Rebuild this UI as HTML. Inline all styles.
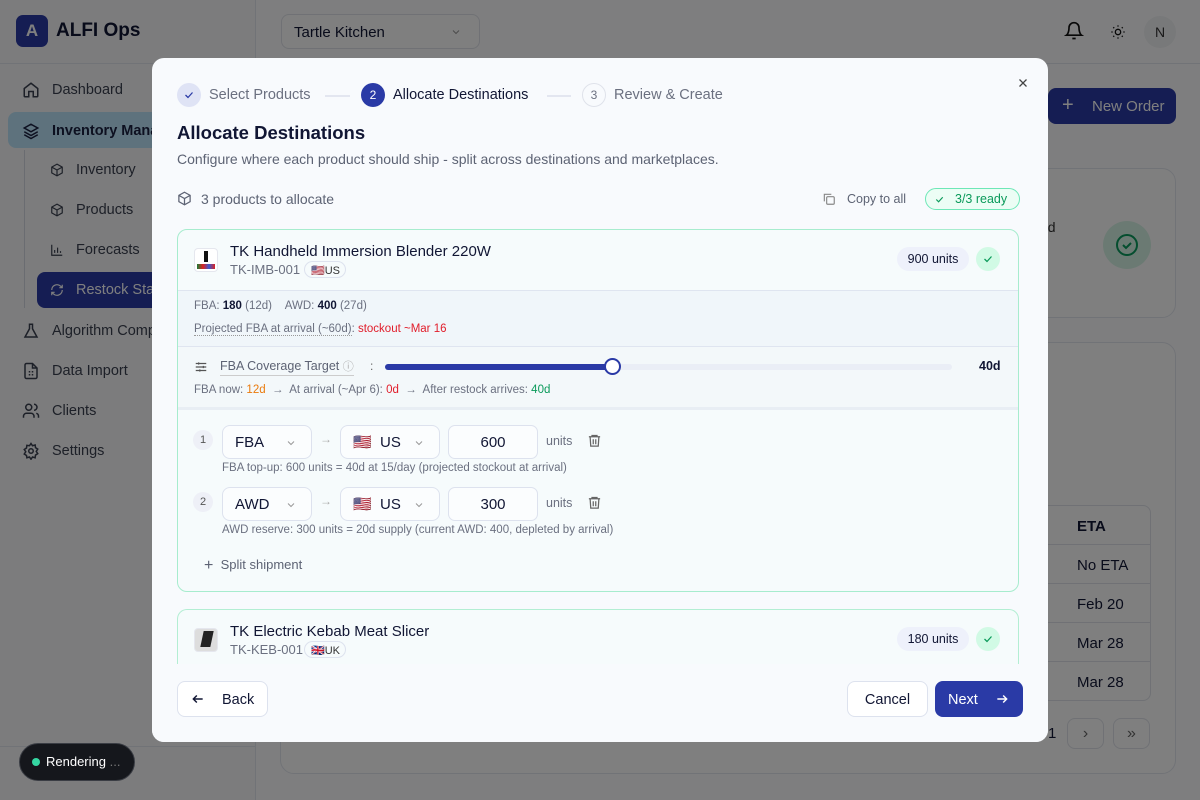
<!DOCTYPE html>
<html><head><meta charset="utf-8">
<style>
*{box-sizing:border-box;margin:0;padding:0}
body{width:1200px;height:800px;overflow:hidden;position:relative;font-family:"Liberation Sans",sans-serif;background:#fdfdfe;color:#111634}
.a{position:absolute}
.side{left:0;top:0;width:256px;height:800px;background:#f8f9fb;border-right:1px solid #e3e6ee}
.nav{font-size:14.5px;color:#3b4150;display:flex;align-items:center}
.nav svg{margin-right:12px}
.ov{left:0;top:0;width:1200px;height:800px;background:rgba(0,0,0,.5)}
.modal{left:152px;top:58px;width:896px;height:684px;background:#f8fafd;border-radius:12px;overflow:hidden}
.t{position:absolute;white-space:nowrap}
.sel{position:absolute;height:34px;border:1px solid #dde2ee;border-radius:8px;background:#fbfdfe;font-size:15px;display:flex;align-items:center;padding-left:12px}
.chev{position:absolute;right:14px;top:11px}
</style></head><body>
<div class="a side">
  <div class="a" style="left:16px;top:15px;width:32px;height:32px;border-radius:7px;background:#2a3aa6;color:#fff;font-weight:bold;font-size:17px;text-align:center;line-height:32px">A</div>
  <div class="t" style="left:56px;top:20px;font-size:19px;font-weight:bold">ALFI Ops</div>
  <div class="a" style="left:0;top:63px;width:256px;border-top:1px solid #e3e6ee"></div>
  <div class="a nav" style="left:22px;top:81px"><svg width="18" height="18" viewBox="0 0 24 24" fill="none" stroke="#3b4150" stroke-width="2"><path d="M3 10l9-7 9 7v10a1 1 0 0 1-1 1h-5v-7h-6v7H4a1 1 0 0 1-1-1z"/></svg>Dashboard</div>
  <div class="a" style="left:8px;top:112px;width:260px;height:36px;border-radius:8px;background:#bde5fb"></div>
  <div class="a nav" style="left:22px;top:122px;font-weight:bold;color:#1a2040"><svg width="18" height="18" viewBox="0 0 24 24" fill="none" stroke="#1a2040" stroke-width="2"><path d="M12 3l9 5-9 5-9-5z M3 13l9 5 9-5 M3 17l9 5 9-5"/></svg>Inventory Management</div>
  <div class="a" style="left:24px;top:150px;height:158px;border-left:1px solid #d5d9e2"></div>
  <div class="a nav" style="left:50px;top:162px"><svg width="14" height="14" viewBox="0 0 24 24" fill="none" stroke="#3b4150" stroke-width="2"><path d="M12 2l9 5v10l-9 5-9-5V7z M3 7l9 5 9-5 M12 12v10"/></svg>Inventory</div>
  <div class="a nav" style="left:50px;top:202px"><svg width="14" height="14" viewBox="0 0 24 24" fill="none" stroke="#3b4150" stroke-width="2"><path d="M12 2l9 5v10l-9 5-9-5V7z M3 7l9 5 9-5 M12 12v10"/></svg>Products</div>
  <div class="a nav" style="left:50px;top:242px"><svg width="14" height="14" viewBox="0 0 24 24" fill="none" stroke="#3b4150" stroke-width="2"><path d="M3 3v18h18 M8 17v-5 M13 17V8 M18 17v-3"/></svg>Forecasts</div>
  <div class="a" style="left:37px;top:272px;width:230px;height:36px;border-radius:8px;background:#2a3aa6"></div>
  <div class="a nav" style="left:50px;top:282px;color:#fff"><svg width="14" height="14" viewBox="0 0 24 24" fill="none" stroke="#fff" stroke-width="2"><path d="M21 12a9 9 0 0 1-15 6.7L3 16 M3 12a9 9 0 0 1 15-6.7L21 8 M21 3v5h-5 M3 21v-5h5"/></svg>Restock Starter</div>
  <div class="a nav" style="left:22px;top:322px"><svg width="18" height="18" viewBox="0 0 24 24" fill="none" stroke="#3b4150" stroke-width="2"><path d="M9 3h6 M10 3v6L4 20h16l-6-11V3"/></svg>Algorithm Comparison</div>
  <div class="a nav" style="left:22px;top:362px"><svg width="18" height="18" viewBox="0 0 24 24" fill="none" stroke="#3b4150" stroke-width="2"><path d="M14 2H6a2 2 0 0 0-2 2v16a2 2 0 0 0 2 2h12a2 2 0 0 0 2-2V8z M14 2v6h6 M9 13h2 M13 13h2 M9 17h2 M13 17h2"/></svg>Data Import</div>
  <div class="a nav" style="left:22px;top:402px"><svg width="18" height="18" viewBox="0 0 24 24" fill="none" stroke="#3b4150" stroke-width="2"><circle cx="9" cy="7" r="4"/><path d="M2 21v-2a4 4 0 0 1 4-4h6a4 4 0 0 1 4 4v2 M16 3a4 4 0 0 1 0 8 M22 21v-2a4 4 0 0 0-3-3.9"/></svg>Clients</div>
  <div class="a nav" style="left:22px;top:442px"><svg width="18" height="18" viewBox="0 0 24 24" fill="none" stroke="#3b4150" stroke-width="2"><circle cx="12" cy="12" r="3"/><path d="M12 2l2 3 3.5-1 .5 3.5 3 2-2 3 2 3-3 2-.5 3.5-3.5-1-2 3-2-3-3.5 1L6 18l-3-2 2-3-2-3 3-2 .5-3.5L10 5z"/></svg>Settings</div>
  <div class="a" style="left:0;top:746px;width:256px;border-top:1px solid #e3e6ee"></div>
</div>
<div class="a" style="left:256px;top:63px;width:944px;border-top:1px solid #e3e6ee"></div>
<div class="a" style="left:281px;top:14px;width:199px;height:35px;border:1px solid #e0e3ea;border-radius:8px;background:#fff;font-size:15px;padding:9px 12px">Tartle Kitchen</div>
<svg class="a" style="left:450px;top:26px" width="12" height="12" viewBox="0 0 24 24" fill="none" stroke="#999" stroke-width="2"><path d="M6 9l6 6 6-6"/></svg>
<svg class="a" style="left:1064px;top:21px" width="20" height="20" viewBox="0 0 24 24" fill="none" stroke="#111" stroke-width="2"><path d="M6 8a6 6 0 0 1 12 0c0 7 3 9 3 9H3s3-2 3-9 M10 21h4"/></svg>
<svg class="a" style="left:1110px;top:24px" width="16" height="16" viewBox="0 0 24 24" fill="none" stroke="#111" stroke-width="2"><circle cx="12" cy="12" r="4"/><path d="M12 2v2M12 20v2M4.9 4.9l1.4 1.4M17.7 17.7l1.4 1.4M2 12h2M20 12h2M4.9 19.1l1.4-1.4M17.7 6.3l1.4-1.4"/></svg>
<div class="a" style="left:1144px;top:16px;width:32px;height:32px;border-radius:50%;background:#f1f2f5;font-size:14px;text-align:center;line-height:32px;color:#333">N</div>
<div class="a" style="left:1048px;top:88px;width:128px;height:36px;border-radius:8px;background:#2a3aa6;color:#fff;font-size:15px;padding:10px 0 0 44px">New Order</div>
<div class="t" style="left:1062px;top:94px;color:#fff;font-size:20px">+</div>
<div class="a" style="left:280px;top:168px;width:896px;height:150px;border:1px solid #e3e6ee;border-radius:14px;background:#fff"></div>
<div class="t" style="left:1040px;top:219px;font-size:14px;color:#333">ed</div>
<div class="a" style="left:1103px;top:221px;width:48px;height:48px;border-radius:50%;background:#d7f5e6"></div>
<svg class="a" style="left:1115px;top:233px" width="24" height="24" viewBox="0 0 24 24" fill="none" stroke="#0b9c5e" stroke-width="2"><circle cx="12" cy="12" r="10"/><path d="M8 12l3 3 5-5"/></svg>
<div class="a" style="left:280px;top:342px;width:896px;height:432px;border:1px solid #e3e6ee;border-radius:14px;background:#fff"></div>
<div class="a" style="left:960px;top:505px;width:191px;height:196px;border:1px solid #e0e3ea;border-radius:8px;overflow:hidden;font-size:15px">
  <div style="height:39px;border-bottom:1px solid #e0e3ea;padding:12px 0 0 116px;font-weight:bold">ETA</div>
  <div style="height:39px;border-bottom:1px solid #e0e3ea;padding:12px 0 0 116px">No ETA</div>
  <div style="height:39px;border-bottom:1px solid #e0e3ea;padding:12px 0 0 116px">Feb 20</div>
  <div style="height:39px;border-bottom:1px solid #e0e3ea;padding:12px 0 0 116px">Mar 28</div>
  <div style="height:39px;padding:12px 0 0 116px">Mar 28</div>
</div>
<div class="t" style="left:1048px;top:725px;font-size:15px">1</div>
<div class="a" style="left:1067px;top:718px;width:37px;height:31px;border:1px solid #e0e3ea;border-radius:8px;text-align:center;line-height:29px;color:#666">›</div>
<div class="a" style="left:1113px;top:718px;width:37px;height:31px;border:1px solid #e0e3ea;border-radius:8px;text-align:center;line-height:29px;color:#666">»</div>
<div class="a ov"></div>

<div class="a" style="left:19px;top:743px;width:116px;height:38px;border-radius:19px;background:#15171c;border:1px solid #3a3d44"></div>
<div class="a" style="left:32px;top:758px;width:8px;height:8px;border-radius:50%;background:#35d6a2"></div>
<div class="t" style="left:46px;top:754px;color:#fff;font-size:13px">Rendering <span style="color:#777">...</span></div>

<div class="a modal">
  <div class="a" style="left:25px;top:25px;width:24px;height:24px;border-radius:50%;background:#dfe3f5"></div>
  <svg class="a" style="left:31px;top:31px" width="12" height="12" viewBox="0 0 24 24" fill="none" stroke="#2a3aa6" stroke-width="2.5"><path d="M5 12l5 5 9-10"/></svg>
  <div class="t" style="left:57px;top:29px;font-size:14.5px;color:#6b7080">Select Products</div>
  <div class="a" style="left:173px;top:37px;width:25px;border-top:2px solid #e3e6f0"></div>
  <div class="a" style="left:209px;top:25px;width:24px;height:24px;border-radius:50%;background:#2a3aa6;color:#fff;font-size:12px;text-align:center;line-height:24px">2</div>
  <div class="t" style="left:241px;top:29px;font-size:14.5px;color:#111634">Allocate Destinations</div>
  <div class="a" style="left:395px;top:37px;width:24px;border-top:2px solid #e3e6f0"></div>
  <div class="a" style="left:430px;top:25px;width:24px;height:24px;border-radius:50%;border:1px solid #dfe2ea;color:#6b7080;font-size:12px;text-align:center;line-height:22px">3</div>
  <div class="t" style="left:462px;top:29px;font-size:14.5px;color:#6b7080">Review &amp; Create</div>
  <svg class="a" style="left:865px;top:19px" width="12" height="12" viewBox="0 0 24 24" fill="none" stroke="#444" stroke-width="2.5"><path d="M5 5l14 14M19 5L5 19"/></svg>

  <div class="t" style="left:25px;top:64px;font-size:18.5px;font-weight:bold;color:#111634">Allocate Destinations</div>
  <div class="t" style="left:25px;top:93px;font-size:14px;color:#5d6374">Configure where each product should ship - split across destinations and marketplaces.</div>

  <svg class="a" style="left:25px;top:133px" width="15" height="15" viewBox="0 0 24 24" fill="none" stroke="#5d6374" stroke-width="2"><path d="M12 2l9 5v10l-9 5-9-5V7z M3 7l9 5 9-5 M12 12v10"/></svg>
  <div class="t" style="left:49px;top:133px;font-size:14px;color:#5d6374">3 products to allocate</div>
  <svg class="a" style="left:670px;top:134px" width="14" height="14" viewBox="0 0 24 24" fill="none" stroke="#888" stroke-width="2"><rect x="8" y="8" width="13" height="13" rx="2"/><path d="M4 16V4h12"/></svg>
  <div class="t" style="left:695px;top:134px;font-size:12.5px;color:#5d6374">Copy to all</div>
  <div class="a" style="left:773px;top:130px;width:95px;height:22px;border-radius:11px;border:1px solid #6ee7b7;background:#ecfdf5;color:#0a9a5a;font-size:12.5px;padding:3px 0 0 29px">3/3 ready</div>
  <svg class="a" style="left:782px;top:136px" width="11" height="11" viewBox="0 0 24 24" fill="none" stroke="#0a9a5a" stroke-width="2.5"><path d="M5 12l5 5 9-10"/></svg>

  <div class="a" style="left:25px;top:171px;width:842px;height:363px;border:1px solid #a7ecce;border-radius:10px;background:#f6fbfc;overflow:hidden">
    <div class="a" style="left:16px;top:18px;width:24px;height:24px;border:1px solid #e5e7ee;border-radius:4px;background:#fff"></div>
    <div class="a" style="left:26px;top:21px;width:4px;height:11px;background:#111"></div>
    <div class="a" style="left:19px;top:34px;width:18px;height:5px;background:linear-gradient(90deg,#1a7f37,#d22,#3a5ad0,#d22)"></div>
    <div class="t" style="left:52px;top:13px;font-size:15px;color:#111634">TK Handheld Immersion Blender 220W</div>
    <div class="t" style="left:52px;top:32px;font-size:13px;color:#6b7080">TK-IMB-001</div>
    <div class="a" style="left:126px;top:31px;width:42px;height:17px;border:1px solid #dde2ee;border-radius:9px;font-size:11px;padding:2px 0 0 6px;color:#333">🇺🇸US</div>
    <div class="a" style="left:719px;top:17px;width:72px;height:24px;border-radius:12px;background:#eef1fb;font-size:12.5px;text-align:center;line-height:24px">900 units</div>
    <div class="a" style="left:798px;top:17px;width:24px;height:24px;border-radius:50%;background:#d1fae5"></div>
    <svg class="a" style="left:804px;top:23px" width="12" height="12" viewBox="0 0 24 24" fill="none" stroke="#0a9a5a" stroke-width="2.5"><path d="M5 12l5 5 9-10"/></svg>

    <div class="a" style="left:0;top:60px;width:842px;height:57px;background:#f0f6fa;border-top:1px solid #dfe5f0;border-bottom:1px solid #dfe5f0"></div>
    <div class="t" style="left:16px;top:70px;font-size:11.5px;color:#6b7080">FBA: <b style="color:#111634">180</b> (12d) &nbsp;&nbsp;&nbsp;AWD: <b style="color:#111634">400</b> (27d)</div>
    <div class="t" style="left:16px;top:93px;font-size:11.5px;color:#6b7080"><span style="border-bottom:1px dotted #999">Projected FBA at arrival (~60d)</span>: <span style="color:#e11d2a">stockout ~Mar 16</span></div>

    <div class="a" style="left:0;top:117px;width:842px;height:63px;background:#f3f8fa;border-bottom:3px solid #e8eef4"></div>
    <svg class="a" style="left:16px;top:130px" width="14" height="14" viewBox="0 0 24 24" fill="none" stroke="#555" stroke-width="2"><path d="M3 6h18M3 12h18M3 18h18M8 4v4M16 10v4M10 16v4"/></svg>
    <div class="t" style="left:42px;top:128px;font-size:12.5px;color:#5d6374;border-bottom:1px solid #ccc;padding-bottom:1px">FBA Coverage Target <span style="font-size:11px;color:#aaa">ⓘ</span></div>
    <div class="t" style="left:192px;top:129px;font-size:12px;color:#666">:</div>
    <div class="a" style="left:207px;top:134px;width:567px;height:6px;border-radius:3px;background:#eaeef6"></div>
    <div class="a" style="left:207px;top:134px;width:228px;height:6px;border-radius:3px;background:#2a3aa6"></div>
    <div class="a" style="left:426px;top:128px;width:17px;height:17px;border-radius:50%;background:#fff;border:2px solid #2a3aa6"></div>
    <div class="t" style="left:801px;top:129px;font-size:12.5px;font-weight:bold">40d</div>
    <div class="t" style="left:16px;top:154px;font-size:11.5px;color:#6b7080">FBA now: <span style="color:#ea7a0c">12d</span> &nbsp;→&nbsp; At arrival (~Apr 6): <span style="color:#e11d2a">0d</span> &nbsp;→&nbsp; After restock arrives: <span style="color:#0a9a5a">40d</span></div>

    <div class="a" style="left:15px;top:200px;width:20px;height:20px;border-radius:50%;background:#eef0f7;font-size:11px;color:#555;text-align:center;line-height:20px">1</div>
    <div class="sel" style="left:44px;top:195px;width:90px">FBA<svg class="chev" width="12" height="12" viewBox="0 0 24 24" fill="none" stroke="#999" stroke-width="2"><path d="M6 9l6 6 6-6"/></svg></div>
    <div class="t" style="left:142px;top:202px;font-size:12px;color:#aaa">→</div>
    <div class="sel" style="left:162px;top:195px;width:100px">🇺🇸&nbsp; US<svg class="chev" width="12" height="12" viewBox="0 0 24 24" fill="none" stroke="#999" stroke-width="2"><path d="M6 9l6 6 6-6"/></svg></div>
    <div class="sel" style="left:270px;top:195px;width:90px;justify-content:center;padding:0;border-radius:7px">600</div>
    <div class="t" style="left:368px;top:204px;font-size:12.5px;color:#6b7080">units</div>
    <svg class="a" style="left:409px;top:203px" width="15" height="15" viewBox="0 0 24 24" fill="none" stroke="#666" stroke-width="2"><path d="M3 6h18M8 6V4h8v2M5 6l1 15h12l1-15M10 10v8M14 10v8"/></svg>
    <div class="t" style="left:44px;top:232px;font-size:11.5px;color:#6b7080">FBA top-up: 600 units = 40d at 15/day (projected stockout at arrival)</div>

    <div class="a" style="left:15px;top:262px;width:20px;height:20px;border-radius:50%;background:#eef0f7;font-size:11px;color:#555;text-align:center;line-height:20px">2</div>
    <div class="sel" style="left:44px;top:257px;width:90px">AWD<svg class="chev" width="12" height="12" viewBox="0 0 24 24" fill="none" stroke="#999" stroke-width="2"><path d="M6 9l6 6 6-6"/></svg></div>
    <div class="t" style="left:142px;top:264px;font-size:12px;color:#aaa">→</div>
    <div class="sel" style="left:162px;top:257px;width:100px">🇺🇸&nbsp; US<svg class="chev" width="12" height="12" viewBox="0 0 24 24" fill="none" stroke="#999" stroke-width="2"><path d="M6 9l6 6 6-6"/></svg></div>
    <div class="sel" style="left:270px;top:257px;width:90px;justify-content:center;padding:0;border-radius:7px">300</div>
    <div class="t" style="left:368px;top:266px;font-size:12.5px;color:#6b7080">units</div>
    <svg class="a" style="left:409px;top:265px" width="15" height="15" viewBox="0 0 24 24" fill="none" stroke="#666" stroke-width="2"><path d="M3 6h18M8 6V4h8v2M5 6l1 15h12l1-15M10 10v8M14 10v8"/></svg>
    <div class="t" style="left:44px;top:294px;font-size:11.5px;color:#6b7080">AWD reserve: 300 units = 20d supply (current AWD: 400, depleted by arrival)</div>

    <div class="t" style="left:26px;top:326px;font-size:13px;color:#5d6374"><span style="font-size:16px;position:relative;top:1px">+</span>&nbsp;&nbsp;Split shipment</div>
  </div>

  <div class="a" style="left:25px;top:551px;width:842px;height:80px;border:1px solid #b3eed3;border-bottom:none;border-radius:10px 10px 0 0;background:#f6fbfc;overflow:hidden">
    <div class="a" style="left:16px;top:18px;width:24px;height:24px;border:1px solid #e5e7ee;border-radius:4px;background:#ddd"></div>
    <div class="a" style="left:24px;top:21px;width:10px;height:16px;background:#222;transform:skewX(-12deg)"></div>
    <div class="t" style="left:52px;top:13px;font-size:15px;color:#111634">TK Electric Kebab Meat Slicer</div>
    <div class="t" style="left:52px;top:32px;font-size:13px;color:#6b7080">TK-KEB-001</div>
    <div class="a" style="left:126px;top:31px;width:42px;height:17px;border:1px solid #dde2ee;border-radius:9px;font-size:11px;padding:2px 0 0 6px;color:#333">🇬🇧UK</div>
    <div class="a" style="left:719px;top:17px;width:72px;height:24px;border-radius:12px;background:#eef1fb;font-size:12.5px;text-align:center;line-height:24px">180 units</div>
    <div class="a" style="left:798px;top:17px;width:24px;height:24px;border-radius:50%;background:#d1fae5"></div>
    <svg class="a" style="left:804px;top:23px" width="12" height="12" viewBox="0 0 24 24" fill="none" stroke="#0a9a5a" stroke-width="2.5"><path d="M5 12l5 5 9-10"/></svg>
  </div>
  <div class="a" style="left:0;top:606px;width:896px;height:78px;background:#f8fafd"></div>

  <div class="a" style="left:25px;top:623px;width:91px;height:36px;border:1px solid #dde2ee;border-radius:8px;background:#fff;font-size:14.5px;padding:10px 0 0 44px;color:#111634">Back</div>
  <svg class="a" style="left:39px;top:634px" width="14" height="14" viewBox="0 0 24 24" fill="none" stroke="#111634" stroke-width="2.5"><path d="M20 12H4M10 6l-6 6 6 6"/></svg>
  <div class="a" style="left:695px;top:623px;width:81px;height:36px;border:1px solid #dde2ee;border-radius:8px;background:#fff;font-size:14.5px;text-align:center;line-height:36px">Cancel</div>
  <div class="a" style="left:783px;top:623px;width:88px;height:36px;border-radius:8px;background:#2a3aa6;color:#fff;font-size:14.5px;padding:11px 0 0 13px">Next</div>
  <svg class="a" style="left:843px;top:634px" width="14" height="14" viewBox="0 0 24 24" fill="none" stroke="#fff" stroke-width="2.5"><path d="M4 12h16M14 6l6 6-6 6"/></svg>
</div>
</body></html>
